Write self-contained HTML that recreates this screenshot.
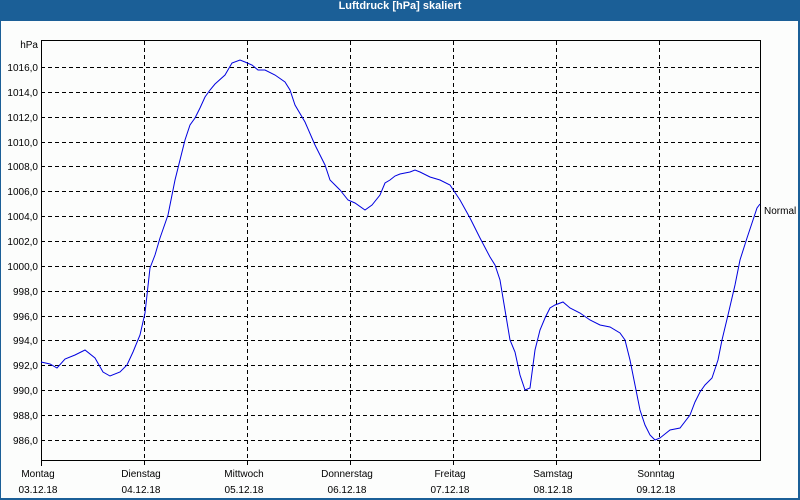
<!DOCTYPE html>
<html><head><meta charset="utf-8"><style>
html,body{margin:0;padding:0;background:#fff;}
.w{position:relative;width:800px;height:500px;overflow:hidden;background:#1b5f97;}
.in{position:absolute;left:1px;top:21px;width:797px;height:477px;background:#fcfdfc;}
.t{position:absolute;left:0;top:0;width:800px;height:21px;line-height:20px;text-align:center;color:#fff;font:bold 11px "Liberation Sans",sans-serif;}
svg{position:absolute;left:0;top:0}
text{font-family:"Liberation Sans",sans-serif;font-size:10px;fill:#000}
</style></head><body><div class="w"><div class="t">Luftdruck [hPa] skaliert</div><div class="in"></div>
<svg width="800" height="500">
<g stroke="#000" stroke-width="1" stroke-dasharray="4,3" shape-rendering="crispEdges">
<line x1="41" x2="760" y1="67.5" y2="67.5"/><line x1="41" x2="760" y1="92.5" y2="92.5"/><line x1="41" x2="760" y1="117.5" y2="117.5"/><line x1="41" x2="760" y1="142.5" y2="142.5"/><line x1="41" x2="760" y1="166.5" y2="166.5"/><line x1="41" x2="760" y1="191.5" y2="191.5"/><line x1="41" x2="760" y1="216.5" y2="216.5"/><line x1="41" x2="760" y1="241.5" y2="241.5"/><line x1="41" x2="760" y1="266.5" y2="266.5"/><line x1="41" x2="760" y1="291.5" y2="291.5"/><line x1="41" x2="760" y1="316.5" y2="316.5"/><line x1="41" x2="760" y1="340.5" y2="340.5"/><line x1="41" x2="760" y1="365.5" y2="365.5"/><line x1="41" x2="760" y1="390.5" y2="390.5"/><line x1="41" x2="760" y1="415.5" y2="415.5"/><line x1="41" x2="760" y1="440.5" y2="440.5"/>
<line x1="144.5" x2="144.5" y1="41" y2="466"/><line x1="247.5" x2="247.5" y1="41" y2="466"/><line x1="350.5" x2="350.5" y1="41" y2="466"/><line x1="453.5" x2="453.5" y1="41" y2="466"/><line x1="556.5" x2="556.5" y1="41" y2="466"/><line x1="659.5" x2="659.5" y1="41" y2="466"/>
</g>
<path d="M41.5 466 V40.5 H760.5 V460.5 H41.5" fill="none" stroke="#000" shape-rendering="crispEdges"/>
<polyline fill="none" stroke="#0000e0" stroke-width="1" points="41,362 50,364 57,368 65,359 75,355 85,350 95,358 103,372 110,376 120,372 127,365 133,352 140,335 145,313 150,268 155,255 160,238 168,215 175,180 180,160 185,140 190,125 195,118 200,108 205,97 210,90 215,84 225,75 232,63 240,60 245,62 252,65 258,70 265,70 275,75 285,82 290,90 295,105 305,122 315,145 325,165 330,180 340,190 348,200 355,203 365,210 372,205 380,195 385,183 390,180 395,176 400,174 410,172 415,170 420,172 430,177 440,180 450,185 460,200 470,218 480,238 490,257 495,265 500,280 505,310 510,340 515,352 520,375 525,390 530,388 535,350 540,330 545,318 550,308 555,305 563,302 570,308 580,313 590,320 600,325 610,327 620,333 625,340 630,360 635,385 640,410 645,425 650,435 655,440 660,438 670,430 680,428 690,415 695,402 700,392 705,385 712,378 718,360 722,340 728,315 735,285 740,260 747,238 752,223 757,208 760,204"/>
<g text-anchor="end">
<text x="38" y="48">hPa</text>
<text x="38" y="71">1016,0</text><text x="38" y="96">1014,0</text><text x="38" y="121">1012,0</text><text x="38" y="146">1010,0</text><text x="38" y="170">1008,0</text><text x="38" y="195">1006,0</text><text x="38" y="220">1004,0</text><text x="38" y="245">1002,0</text><text x="38" y="270">1000,0</text><text x="38" y="295">998,0</text><text x="38" y="320">996,0</text><text x="38" y="344">994,0</text><text x="38" y="369">992,0</text><text x="38" y="394">990,0</text><text x="38" y="419">988,0</text><text x="38" y="444">986,0</text>
</g>
<text x="764" y="214">Normal</text>
<g text-anchor="middle">
<text x="38" y="477">Montag</text><text x="38" y="493">03.12.18</text>
<text x="141" y="477">Dienstag</text><text x="141" y="493">04.12.18</text>
<text x="244" y="477">Mittwoch</text><text x="244" y="493">05.12.18</text>
<text x="347" y="477">Donnerstag</text><text x="347" y="493">06.12.18</text>
<text x="450" y="477">Freitag</text><text x="450" y="493">07.12.18</text>
<text x="553" y="477">Samstag</text><text x="553" y="493">08.12.18</text>
<text x="656" y="477">Sonntag</text><text x="656" y="493">09.12.18</text>
</g>
</svg></div></body></html>
